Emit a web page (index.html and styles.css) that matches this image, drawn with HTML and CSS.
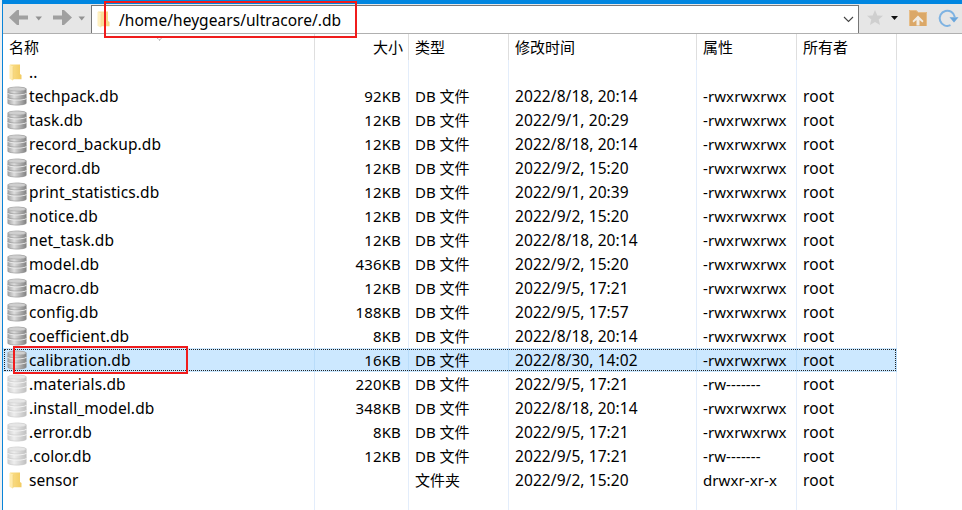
FILE: index.html
```
<!DOCTYPE html>
<html lang="zh-CN">
<head>
<meta charset="utf-8">
<title>/home/heygears/ultracore/.db</title>
<link rel="stylesheet" href="styles.css">
</head>
<body>
<svg class="defs" width="0" height="0" aria-hidden="true">
  <defs>
    <linearGradient id="metal"><stop offset="0" stop-color="#9a9a9a"/><stop offset=".15" stop-color="#bcbcbc"/><stop offset=".35" stop-color="#dedede"/><stop offset=".6" stop-color="#b8b8b8"/><stop offset="1" stop-color="#808080"/></linearGradient>
    <linearGradient id="gold"><stop offset="0" stop-color="#fbe08c"/><stop offset="1" stop-color="#f2cb61"/></linearGradient>
    <symbol id="db" viewBox="0 0 20 20">
      <path d="M.5 3C.5 0 19.500 0 19.500 3V17C19.500 20 .5 20 .5 17Z" fill="url(#metal)"/>
      <ellipse cx="10" cy="3" rx="9" ry="2" fill="#cfcfcf" stroke="#a6a6a6" stroke-width=".6"/>
      <path d="M.5 7.200C3 9.400 17 9.400 19.500 7.200M.5 12.300C3 14.500 17 14.500 19.500 12.300" fill="none" stroke="#ececec" stroke-width="1.100"/>
      <path d="M.5 6.300C3 8.400 17 8.400 19.500 6.300M.5 11.400C3 13.500 17 13.500 19.500 11.400M.8 17.400C3 19.600 17 19.600 19.200 17.400" fill="none" stroke="#979797" stroke-width=".6"/>
    </symbol>
    <symbol id="folder" viewBox="0 0 13 17">
      <path d="M1 .5H11V10L12.500 11V15.300H3Z" fill="url(#gold)"/>
      <path d="M.5 .7L4 2.500V16.800L.5 14.800Z" fill="#ffebac"/>
      <path d="M4 3V16" stroke="#efcf77" stroke-width=".6"/>
    </symbol>
  </defs>
</svg>
<div class="window">
  <header class="toolbar">
    <div class="nav">
      <svg width="88" height="28" viewBox="3 5 88 28">
        <path d="M9 17.500L17 10H19V15.500H28V19.500H19V25H17Z" fill="#a0a0a0"/>
        <path d="M35.500 16.500H42L38.700 20.500Z" fill="#929292"/>
        <path d="M72 17.500L64 10H62V15.500H53V19.500H62V25H64Z" fill="#a0a0a0"/>
        <path d="M78.500 16.500H85L81.700 20.500Z" fill="#929292"/>
      </svg>
    </div>
    <div class="address">
      <svg class="address-folder" width="13" height="17"><use href="#folder"/></svg>
      <span class="path">/home/heygears/ultracore/.db</span>
      <svg class="chevron" width="11" height="7" viewBox="0 0 11 7"><path d="M1 1L5.500 5.500L10 1" fill="none" stroke="#444" stroke-width="1.100"/></svg>
    </div>
    <svg class="tools" width="103" height="28" viewBox="859 5 103 28">
      <path d="M875 10L877.300 15.400L883 15.800L878.700 19.600L880 25L875 22.100L870 25L871.300 19.600L867 15.800L872.700 15.400Z" fill="#cfcfcf"/>
      <path d="M891 16H898L894.500 20Z" fill="#111"/>
      <path d="M909 10H916L918 12H927V26H909Z" fill="#dba868"/>
      <path d="M909.500 26V10.500H916L918 12.500H926.500V26" fill="none" stroke="#e6bd88"/>
      <path d="M918 15.500L923.500 21L922.500 22.500L919.500 20V25.500H916.500V20L913.500 22.500L912.500 21Z" fill="#f1ece4"/>
      <path d="M950.500 25.200A7.600 7.600 0 1 1 954.800 17" fill="none" stroke="#7fb3e2" stroke-width="2"/>
      <path d="M949.500 17.200H958.500L954 22.500Z" fill="#6aa6dc"/>
    </svg>
  </header>
  <main class="list">
    <div class="row head"><span class="name">名称</span><span class="size">大小</span><span>类型</span><span>修改时间</span><span>属性</span><span>所有者</span></div>
    <div class="row"><span class="name"><svg class="dir"><use href="#folder"/></svg>..</span><span></span><span></span><span></span><span></span><span></span></div>
    <div class="row"><span class="name"><svg class="db"><use href="#db"/></svg>techpack.db</span><span class="size">92KB</span><span>DB 文件</span><span class="time">2022/8/18, 20:14</span><span class="mode">-rwxrwxrwx</span><span class="owner">root</span></div>
    <div class="row"><span class="name"><svg class="db"><use href="#db"/></svg>task.db</span><span class="size">12KB</span><span>DB 文件</span><span class="time">2022/9/1, 20:29</span><span class="mode">-rwxrwxrwx</span><span class="owner">root</span></div>
    <div class="row"><span class="name"><svg class="db"><use href="#db"/></svg>record_backup.db</span><span class="size">12KB</span><span>DB 文件</span><span class="time">2022/8/18, 20:14</span><span class="mode">-rwxrwxrwx</span><span class="owner">root</span></div>
    <div class="row"><span class="name"><svg class="db"><use href="#db"/></svg>record.db</span><span class="size">12KB</span><span>DB 文件</span><span class="time">2022/9/2, 15:20</span><span class="mode">-rwxrwxrwx</span><span class="owner">root</span></div>
    <div class="row"><span class="name"><svg class="db"><use href="#db"/></svg>print_statistics.db</span><span class="size">12KB</span><span>DB 文件</span><span class="time">2022/9/1, 20:39</span><span class="mode">-rwxrwxrwx</span><span class="owner">root</span></div>
    <div class="row"><span class="name"><svg class="db"><use href="#db"/></svg>notice.db</span><span class="size">12KB</span><span>DB 文件</span><span class="time">2022/9/2, 15:20</span><span class="mode">-rwxrwxrwx</span><span class="owner">root</span></div>
    <div class="row"><span class="name"><svg class="db"><use href="#db"/></svg>net_task.db</span><span class="size">12KB</span><span>DB 文件</span><span class="time">2022/8/18, 20:14</span><span class="mode">-rwxrwxrwx</span><span class="owner">root</span></div>
    <div class="row"><span class="name"><svg class="db"><use href="#db"/></svg>model.db</span><span class="size">436KB</span><span>DB 文件</span><span class="time">2022/9/2, 15:20</span><span class="mode">-rwxrwxrwx</span><span class="owner">root</span></div>
    <div class="row"><span class="name"><svg class="db"><use href="#db"/></svg>macro.db</span><span class="size">12KB</span><span>DB 文件</span><span class="time">2022/9/5, 17:21</span><span class="mode">-rwxrwxrwx</span><span class="owner">root</span></div>
    <div class="row"><span class="name"><svg class="db"><use href="#db"/></svg>config.db</span><span class="size">188KB</span><span>DB 文件</span><span class="time">2022/9/5, 17:57</span><span class="mode">-rwxrwxrwx</span><span class="owner">root</span></div>
    <div class="row"><span class="name"><svg class="db"><use href="#db"/></svg>coefficient.db</span><span class="size">8KB</span><span>DB 文件</span><span class="time">2022/8/18, 20:14</span><span class="mode">-rwxrwxrwx</span><span class="owner">root</span></div>
    <div class="row selected"><span class="name"><svg class="db"><use href="#db"/></svg>calibration.db</span><span class="size">16KB</span><span>DB 文件</span><span class="time">2022/8/30, 14:02</span><span class="mode">-rwxrwxrwx</span><span class="owner">root</span></div>
    <div class="row hidden-file"><span class="name"><svg class="db"><use href="#db"/></svg>.materials.db</span><span class="size">220KB</span><span>DB 文件</span><span class="time">2022/9/5, 17:21</span><span class="mode">-rw-------</span><span class="owner">root</span></div>
    <div class="row hidden-file"><span class="name"><svg class="db"><use href="#db"/></svg>.install_model.db</span><span class="size">348KB</span><span>DB 文件</span><span class="time">2022/8/18, 20:14</span><span class="mode">-rwxrwxrwx</span><span class="owner">root</span></div>
    <div class="row hidden-file"><span class="name"><svg class="db"><use href="#db"/></svg>.error.db</span><span class="size">8KB</span><span>DB 文件</span><span class="time">2022/9/5, 17:21</span><span class="mode">-rwxrwxrwx</span><span class="owner">root</span></div>
    <div class="row hidden-file"><span class="name"><svg class="db"><use href="#db"/></svg>.color.db</span><span class="size">12KB</span><span>DB 文件</span><span class="time">2022/9/5, 17:21</span><span class="mode">-rw-------</span><span class="owner">root</span></div>
    <div class="row"><span class="name"><svg class="dir"><use href="#folder"/></svg>sensor</span><span></span><span>文件夹</span><span class="time">2022/9/2, 15:20</span><span class="mode">drwxr-xr-x</span><span class="owner">root</span></div>
    <div class="row rest"><span></span><span></span><span></span><span></span><span></span><span></span></div>
  </main>
</div>
<svg class="sort" width="9" height="5" viewBox="0 0 9 5"><path d="M1 1L4.500 4L8 1" fill="none" stroke="#555" stroke-dasharray="1 1"/></svg>
<div class="mark mark-path"></div>
<div class="mark mark-file"></div>
</body>
</html>
```
FILE: styles.css
```
* { box-sizing: border-box; }
body {
  margin: 0;
  width: 962px;
  height: 510px;
  overflow: hidden;
  position: relative;
  background: #f0f0f0;
  color: #000;
  font: 15px/24px "Noto Sans", "Noto Sans CJK SC", sans-serif;
}
.defs { position: absolute; }
.window {
  height: 510px;
  margin-left: 2px;
  border-left: 1px solid #0a84d8;
  background: #fff;
  display: flex;
  flex-direction: column;
}
.toolbar {
  height: 34px;
  flex: none;
  display: flex;
  border-top: 4px solid #0086e0;
  border-bottom: 1px solid #b0b0b0;
  background: #e6e6e6;
  padding-top: 1px;
}
.toolbar svg { display: block; flex: none; }
.nav { width: 88px; flex: none; }
.address {
  width: 768px;
  flex: none;
  display: flex;
  align-items: center;
  border: 1px solid #777;
  border-bottom: 0;
  background: #fff;
  padding: 0 4px 0 5px;
}
.address-folder { opacity: .75; }
.path { margin-left: 9px; flex: 1; font-size: 15.5px; letter-spacing: .05px; white-space: nowrap; }
.list { flex: 1; display: flex; flex-direction: column; }
.row {
  height: 24px;
  flex: none;
  width: 894px;
  display: grid;
  grid-template-columns: 312px 94px 100px 188px 100px 100px;
  position: relative;
}
.row > span {
  border-right: 1px solid #e3edfb;
  padding-left: 6px;
  white-space: pre;
}
.row > .name { display: flex; padding-left: 4px; font-size: 15.5px; letter-spacing: .1px; }
.row > .size { text-align: right; padding: 0 7px 0 0; letter-spacing: .15px; }
.row > .time { font-size: 15.5px; letter-spacing: .08px; }
.row > .mode { letter-spacing: .1px; }
.row > .owner { font-size: 15.5px; letter-spacing: .2px; }
.row svg { display: block; flex: none; }
.db { width: 20px; height: 20px; margin: 2px 2px 0 0; }
.dir { width: 13px; height: 17px; margin: 4px 7px 0 2px; }
.row.head { height: 26px; }
.head > span { border-color: #dedede; padding-top: 1px; }
.head > .name { padding-left: 6px; font-size: 15px; letter-spacing: 0; }
.head > .size { padding: 1px 5px 0 0; letter-spacing: 0; }
.hidden-file .db { opacity: .5; }
.selected { background: #cce8ff; }
.selected > span { border-color: #b8dcfa; }
.selected::after {
  content: "";
  position: absolute;
  inset: 1px;
  border: 1px dotted #222;
}
.row.rest { flex: 1; }
.sort { position: absolute; left: 155px; top: 36px; }
.mark { position: absolute; border: 2px solid #f01c1c; }
.mark-path { left: 104px; top: 1px; width: 253px; height: 37px; }
.mark-file { left: 13px; top: 346px; width: 175px; height: 28px; }
```
